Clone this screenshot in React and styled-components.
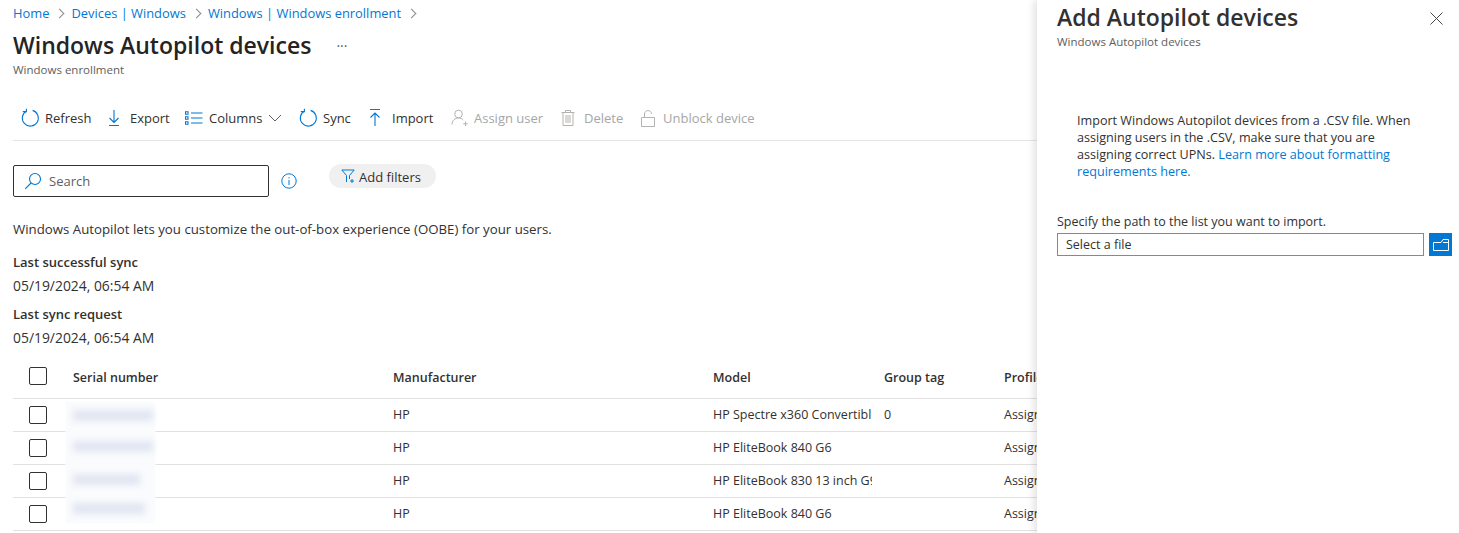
import React from "react";
import styled, { createGlobalStyle } from "styled-components";

const GlobalStyle = createGlobalStyle`
  html, body { margin: 0; padding: 0; background: #fff; }
  body {
    font-family: "Open Sans", "Noto Sans", "Liberation Sans", sans-serif;
    font-size: 13px;
    color: #323130;
    overflow: hidden;
  }
`;

const BLUE = "#0078d4";
const GREY = "#b5b3b1";

const Refresh = ({ color = BLUE }) => (
  <svg width="20" height="20" viewBox="0 0 20 20" fill="none" stroke={color} strokeWidth="1.1">
    <path d="M6.2 3.2A8 8 0 1 0 12.6 2.4" />
    <path d="M6.4 0.8V3.6H2.8" />
  </svg>
);

const Export = () => (
  <svg width="16" height="20" viewBox="0 0 16 20" fill="none" stroke={BLUE} strokeWidth="1.1">
    <path d="M8 2V14.5M3.5 10L8 14.5L12.5 10M3 17.5H13" />
  </svg>
);

const Columns = () => (
  <svg width="18" height="14" viewBox="0 0 18 14" fill="none" stroke={BLUE} strokeWidth="1.1">
    <path d="M6 2H17.5M6 7H17.5M6 12H17.5" />
    <path d="M0.5 0.8H3V3.2H0.5ZM0.5 5.8H3V8.2H0.5ZM0.5 10.8H3V13.2H0.5Z" />
  </svg>
);

const Chevron = () => (
  <svg width="14" height="8" viewBox="0 0 14 8" fill="none" stroke="#605e5c" strokeWidth="1">
    <path d="M1 1L7 7L13 1" />
  </svg>
);

const Import = () => (
  <svg width="16" height="20" viewBox="0 0 16 20" fill="none" stroke={BLUE} strokeWidth="1.1">
    <path d="M3 1.5H13M8 18V5M3.5 9.5L8 5L12.5 9.5" />
  </svg>
);

const AssignUser = () => (
  <svg width="18" height="18" viewBox="0 0 18 18" fill="none" stroke={GREY} strokeWidth="1">
    <circle cx="7.5" cy="5" r="3.8" />
    <path d="M1 15.5C1 11.5 4 9 7.5 9C9.5 9 11 9.6 12.2 10.8M14.5 12.5V17M12.2 14.8H16.8" />
  </svg>
);

const Trash = () => (
  <svg width="14" height="16" viewBox="0 0 14 16" fill="none" stroke={GREY} strokeWidth="1">
    <path d="M0.5 2.5H13.5M2 2.5V15.5H12V2.5M4.5 2.5V0.5H9.5V2.5M5 5V13M7 5V13M9 5V13" />
  </svg>
);

const Lock = () => (
  <svg width="14" height="17" viewBox="0 0 14 17" fill="none" stroke={GREY} strokeWidth="1">
    <path d="M0.5 7.5H13.5V16.5H0.5ZM3.5 7.5V4C3.5 2 5 0.6 7 0.6C9 0.6 10.5 2 10.5 4" />
  </svg>
);

const SearchGlyph = () => (
  <svg width="18" height="18" viewBox="0 0 18 18" fill="none" stroke={BLUE} strokeWidth="1.1">
    <circle cx="11" cy="7" r="5.5" />
    <path d="M7 11L1.2 16.8" />
  </svg>
);

const Info = () => (
  <svg width="16" height="16" viewBox="0 0 16 16" fill="none" stroke={BLUE} strokeWidth="1">
    <circle cx="8" cy="8" r="7.2" />
    <path d="M8 7V12M8 4.2V5.4" />
  </svg>
);

const Funnel = () => (
  <svg width="14" height="14" viewBox="0 0 14 14" fill="none" stroke={BLUE} strokeWidth="1">
    <path d="M0.8 1H13.2L8.5 6.5V10M5.5 13V6.5L0.8 1" />
    <path d="M9 12H13M11 10V14" />
  </svg>
);

const Close = () => (
  <svg width="13" height="13" viewBox="0 0 13 13" fill="none" stroke="#484644" strokeWidth="1">
    <path d="M0.5 0.5L12.5 12.5M12.5 0.5L0.5 12.5" />
  </svg>
);

const Folder = () => (
  <svg width="16" height="12" viewBox="0 0 16 12" fill="none" stroke="#fff" strokeWidth="1">
    <path d="M0.5 3.5H8L10 0.5H15.5V11.5H0.5Z" />
    <path d="M10 3.5H15.5" />
  </svg>
);

const toolbarItems = [
  { label: "Refresh", icon: <Refresh />, gap: 5, width: 86 },
  { label: "Export", icon: <Export />, gap: 8, width: 79 },
  { label: "Columns", icon: <Columns />, gap: 6, width: 113, chevron: true },
  { label: "Sync", icon: <Refresh />, gap: 5, width: 69 },
  { label: "Import", icon: <Import />, gap: 9, width: 84 },
  { label: "Assign user", icon: <AssignUser />, gap: 5, width: 110, off: true },
  { label: "Delete", icon: <Trash />, gap: 9, width: 80, off: true },
  { label: "Unblock device", icon: <Lock />, gap: 8, off: true },
];

const rows = [
  { blot: 80, model: "HP Spectre x360 Convertible 14", tag: "0" },
  { blot: 80, model: "HP EliteBook 840 G6", tag: "" },
  { blot: 67, model: "HP EliteBook 830 13 inch G9", tag: "" },
  { blot: 72, model: "HP EliteBook 840 G6", tag: "" },
];

export default function App() {
  return (
    <>
      <GlobalStyle />
      <Page>
        <Main>
          <Breadcrumb>
            <Crumb>Home</Crumb>
            <Sep />
            <Crumb>Devices | Windows</Crumb>
            <Sep />
            <Crumb>Windows | Windows enrollment</Crumb>
            <Sep />
          </Breadcrumb>
          <TitleRow>
            <Title>Windows Autopilot devices</Title>
            <Dots>···</Dots>
          </TitleRow>
          <Subtitle>Windows enrollment</Subtitle>
          <Toolbar>
            {toolbarItems.map((item) => (
              <ToolItem key={item.label} $off={item.off} $gap={item.gap} $width={item.width}>
                <IconSlot>{item.icon}</IconSlot>
                <span>{item.label}</span>
                {item.chevron && <Chevron />}
              </ToolItem>
            ))}
          </Toolbar>
          <FilterRow>
            <SearchBox>
              <SearchGlyph />
              <span>Search</span>
            </SearchBox>
            <InfoSlot>
              <Info />
            </InfoSlot>
            <FilterPill>
              <Funnel />
              <PillLabel>Add filters</PillLabel>
            </FilterPill>
          </FilterRow>
          <Intro>Windows Autopilot lets you customize the out-of-box experience (OOBE) for your users.</Intro>
          <SyncLabel>Last successful sync</SyncLabel>
          <SyncValue>05/19/2024, 06:54 AM</SyncValue>
          <SyncLabel>Last sync request</SyncLabel>
          <SyncValue>05/19/2024, 06:54 AM</SyncValue>
          <Table>
            <HeadRow>
              <Checkbox />
              <HeadCell>Serial number</HeadCell>
              <HeadCell>Manufacturer</HeadCell>
              <HeadCell>Model</HeadCell>
              <HeadCell>Group tag</HeadCell>
              <HeadCell>Profile status</HeadCell>
            </HeadRow>
            {rows.map((row, i) => (
              <Row key={i}>
                <Checkbox />
                <SerialCell>
                  <Smudge $first={i === 0} $last={i === rows.length - 1}>
                    <Blot $width={row.blot} />
                  </Smudge>
                </SerialCell>
                <Cell>HP</Cell>
                <ModelCell>{row.model}</ModelCell>
                <Cell>{row.tag}</Cell>
                <Cell>Assigned</Cell>
              </Row>
            ))}
          </Table>
        </Main>
        <Panel>
          <PanelHead>
            <div>
              <PanelTitle>Add Autopilot devices</PanelTitle>
              <PanelSub>Windows Autopilot devices</PanelSub>
            </div>
            <CloseSlot>
              <Close />
            </CloseSlot>
          </PanelHead>
          <PanelText>
            Import Windows Autopilot devices from a .CSV file. When assigning users in the .CSV, make sure that you are
            assigning correct UPNs. <PanelLink>Learn more about formatting requirements here.</PanelLink>
          </PanelText>
          <FieldLabel>Specify the path to the list you want to import.</FieldLabel>
          <FileRow>
            <FileInput>Select a file</FileInput>
            <FileButton>
              <Folder />
            </FileButton>
          </FileRow>
        </Panel>
      </Page>
    </>
  );
}

const Page = styled.div`
  display: flex;
  width: 1459px;
  height: 533px;
  overflow: hidden;
`;

const Main = styled.div`
  width: 1037px;
  flex: none;
  padding-left: 13px;
  box-sizing: border-box;
  overflow: hidden;
`;

const Breadcrumb = styled.div`
  display: flex;
  align-items: center;
  height: 26px;
  font-size: 12.9px;
`;

const Crumb = styled.a`
  color: ${BLUE};
  white-space: nowrap;
`;

const Sep = styled.i`
  width: 6px;
  height: 6px;
  margin: 0 8px 0 7px;
  border-top: 1px solid #8a8886;
  border-right: 1px solid #8a8886;
  transform: rotate(45deg);
`;

const TitleRow = styled.div`
  display: flex;
  align-items: center;
  height: 38px;
`;

const Title = styled.h1`
  margin: 0;
  font-size: 23px;
  font-weight: 600;
  color: #252423;
  white-space: nowrap;
`;

const Dots = styled.span`
  margin-left: 25px;
  color: #605e5c;
  font-size: 14px;
`;

const Subtitle = styled.div`
  height: 16px;
  line-height: 11px;
  font-size: 11.5px;
  color: #605e5c;
`;

const Toolbar = styled.div`
  display: flex;
  align-items: center;
  height: 61px;
  box-sizing: border-box;
  padding: 16px 0 0 7px;
  border-bottom: 1px solid #e5e5e5;
`;

const ToolItem = styled.div`
  display: flex;
  align-items: center;
  flex: none;
  width: ${(p) => (p.$width ? `${p.$width}px` : "auto")};
  gap: ${(p) => p.$gap}px;
  color: ${(p) => (p.$off ? "#a6a6a6" : "#323130")};
  white-space: nowrap;
`;

const IconSlot = styled.span`
  display: flex;
  align-items: center;
`;

const FilterRow = styled.div`
  display: flex;
  align-items: center;
  height: 72px;
  padding: 24px 0 16px;
  box-sizing: border-box;
`;

const SearchBox = styled.div`
  display: flex;
  align-items: center;
  gap: 7px;
  width: 256px;
  height: 32px;
  box-sizing: border-box;
  padding-left: 10px;
  border: 1px solid #323130;
  border-radius: 2px;
  color: #605e5c;
`;

const InfoSlot = styled.span`
  display: flex;
  margin: 0 32px 0 12px;
`;

const FilterPill = styled.div`
  display: flex;
  align-items: center;
  gap: 4px;
  height: 24px;
  margin-bottom: 10px;
  padding: 0 15px 0 12px;
  border-radius: 12px;
  background: #f0f0f0;
`;

const PillLabel = styled.span`
  margin-top: 2px;
`;

const Intro = styled.div`
  height: 36px;
  line-height: 32px;
  font-size: 13.25px;
`;

const SyncLabel = styled.div`
  height: 25px;
  line-height: 26px;
  font-weight: 600;
`;

const SyncValue = styled.div`
  height: 27px;
  line-height: 24px;
  font-size: 13.9px;
`;

const Table = styled.div`
  margin-top: 1px;
  font-size: 12.5px;
`;

const gridColumns = `
  display: grid;
  grid-template-columns: 60px 320px 320px 171px 120px 120px;
  align-items: center;
`;

const HeadRow = styled.div`
  ${gridColumns}
  height: 44px;
  border-bottom: 1px solid #e1e1e1;
`;

const Row = styled.div`
  ${gridColumns}
  height: 32px;
  border-bottom: 1px solid #e1e1e1;
`;

const Checkbox = styled.span`
  width: 16px;
  height: 16px;
  margin-left: 16px;
  border: 1px solid #323130;
  border-radius: 2px;
`;

const HeadCell = styled.div`
  margin-top: 2px;
  font-weight: 600;
  white-space: nowrap;
  overflow: hidden;
`;

const Cell = styled.div`
  padding-bottom: 2px;
  white-space: nowrap;
  overflow: hidden;
`;

const ModelCell = styled(Cell)`
  width: 159px;
`;

const SerialCell = styled.div`
  position: relative;
  height: 32px;
`;

const Smudge = styled.span`
  position: absolute;
  left: -7px;
  width: 89px;
  top: ${(p) => (p.$first ? "3px" : "-1px")};
  bottom: ${(p) => (p.$last ? "7px" : "-1px")};
  background: #fafbfd;
  box-shadow: 0 0 3px #fafbfd;
`;

const Blot = styled.span`
  position: absolute;
  left: 7px;
  width: ${(p) => p.$width}px;
  top: 50%;
  height: 11px;
  margin-top: -7px;
  background: #e1e6f2;
  filter: blur(3px);
`;

const Panel = styled.div`
  position: relative;
  width: 422px;
  flex: none;
  height: 100%;
  padding-left: 20px;
  box-sizing: border-box;
  background: #fff;
  box-shadow: -3px 0 8px rgba(0, 0, 0, 0.12);
  font-size: 12.5px;
`;

const PanelHead = styled.div`
  display: flex;
  justify-content: space-between;
  padding-right: 16px;
`;

const PanelTitle = styled.h2`
  margin: 0;
  height: 35px;
  line-height: 34px;
  font-size: 23px;
  font-weight: 600;
  color: #323130;
  white-space: nowrap;
`;

const PanelSub = styled.div`
  font-size: 11.5px;
  line-height: 14px;
  color: #605e5c;
`;

const CloseSlot = styled.span`
  display: flex;
  margin-top: 12px;
`;

const PanelText = styled.p`
  width: 342px;
  margin: 63px 0 0 20px;
  line-height: 17px;
  font-size: 12.6px;
`;

const PanelLink = styled.a`
  color: ${BLUE};
`;

const FieldLabel = styled.div`
  margin-top: 33px;
  height: 20px;
  line-height: 18px;
`;

const FileRow = styled.div`
  display: flex;
  gap: 5px;
`;

const FileInput = styled.div`
  width: 367px;
  height: 23px;
  box-sizing: border-box;
  padding-left: 8px;
  line-height: 21px;
  border: 1px solid #8a8886;
`;

const FileButton = styled.div`
  display: flex;
  align-items: center;
  justify-content: center;
  width: 23px;
  height: 23px;
  background: ${BLUE};
`;
